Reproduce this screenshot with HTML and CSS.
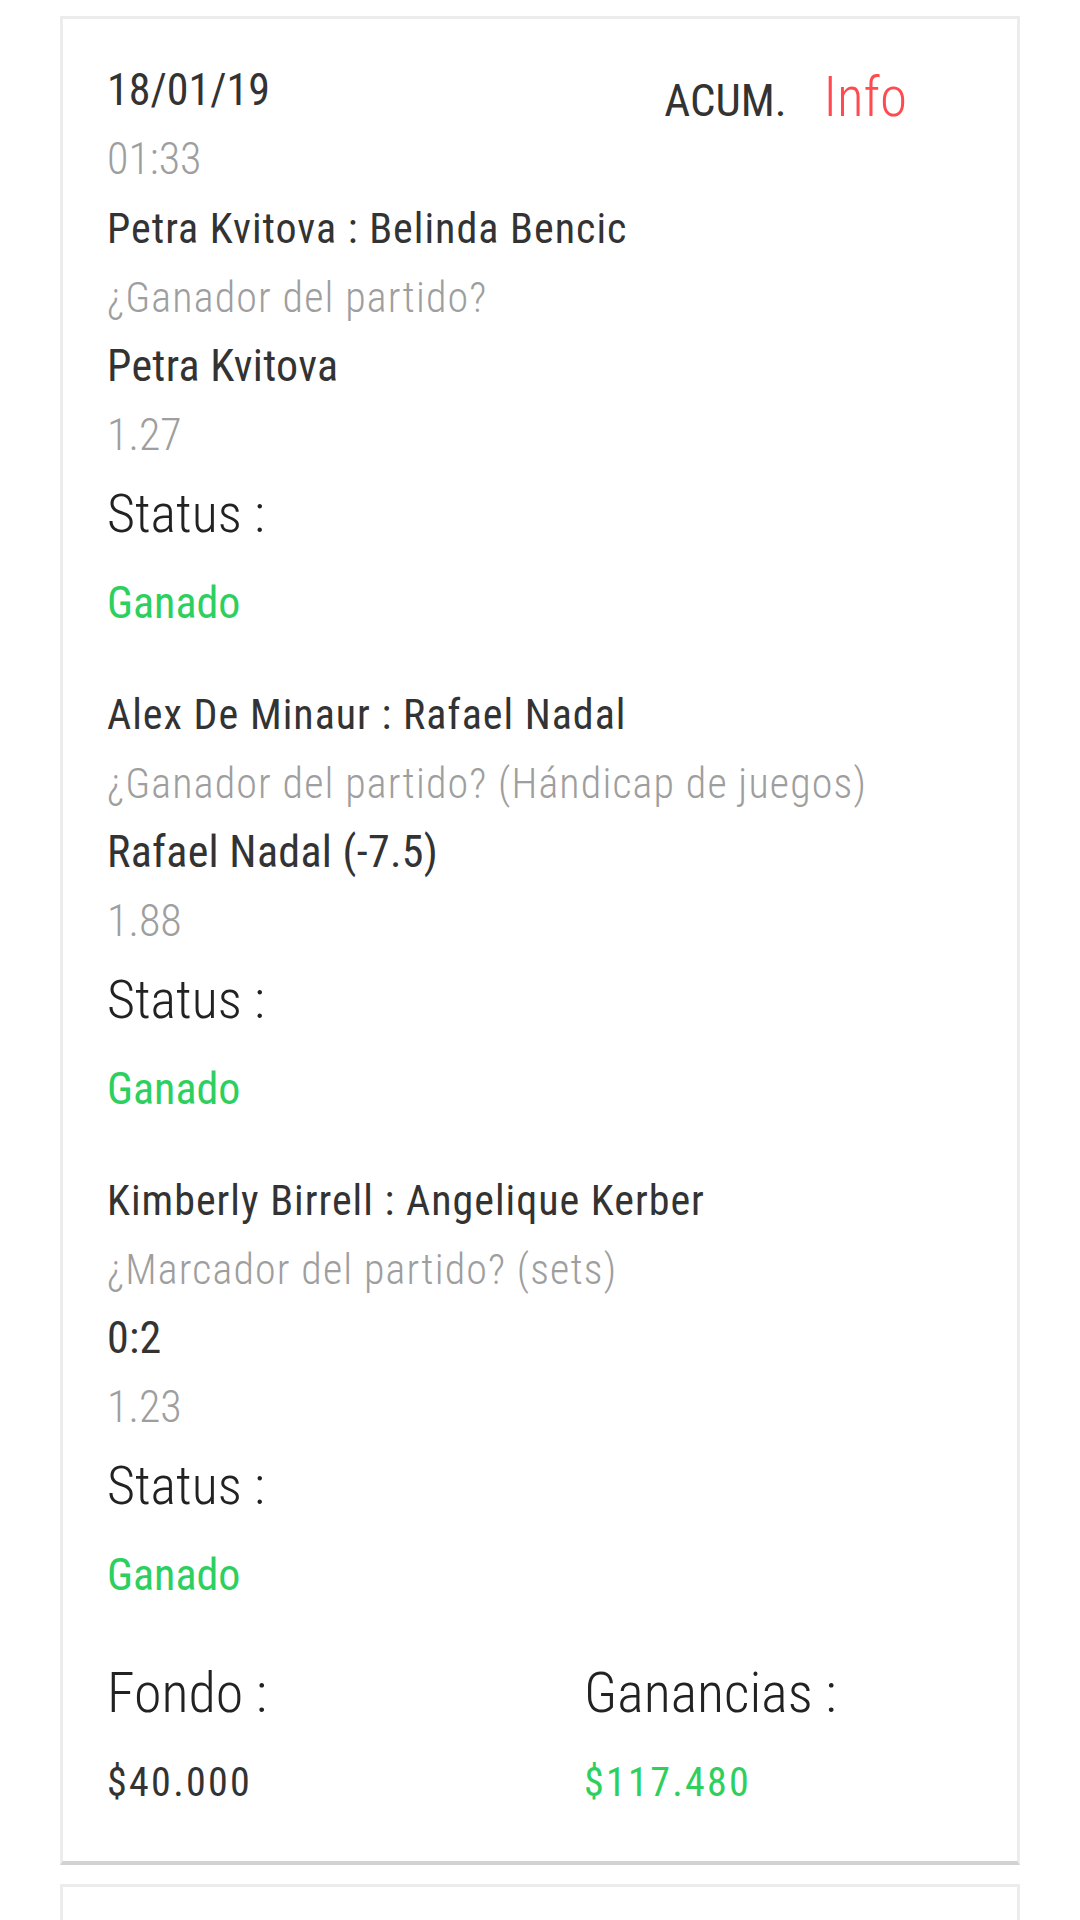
FILE: index.html
```html
<!DOCTYPE html>
<html lang="es">
<head>
<meta charset="utf-8">
<title>Apuesta acumulada</title>
<link rel="stylesheet" href="styles.css">
</head>
<body>
<div class="list">
  <article class="card">
    <header class="head">
      <div class="when">
        <div class="line strong date">18/01/19</div>
        <div class="line muted">01:33</div>
      </div>
      <div class="tags">
        <span class="acum">ACUM.</span>
        <span class="info">Info</span>
      </div>
    </header>

    <section class="bet first">
      <div class="line strong match">Petra Kvitova : Belinda Bencic</div>
      <div class="line muted question">¿Ganador del partido?</div>
      <div class="line strong pick">Petra Kvitova</div>
      <div class="line muted">1.27</div>
      <div class="line status">Status :</div>
      <div class="line strong won">Ganado</div>
    </section>

    <section class="bet">
      <div class="line strong match">Alex De Minaur : Rafael Nadal</div>
      <div class="line muted question">¿Ganador del partido? (Hándicap de juegos)</div>
      <div class="line strong pick">Rafael Nadal (-7.5)</div>
      <div class="line muted">1.88</div>
      <div class="line status">Status :</div>
      <div class="line strong won">Ganado</div>
    </section>

    <section class="bet">
      <div class="line strong match">Kimberly Birrell : Angelique Kerber</div>
      <div class="line muted question">¿Marcador del partido? (sets)</div>
      <div class="line strong pick">0:2</div>
      <div class="line muted">1.23</div>
      <div class="line status">Status :</div>
      <div class="line strong won">Ganado</div>
    </section>

    <footer class="totals">
      <div class="total">
        <div class="line label">Fondo :</div>
        <div class="line amount">$40.000</div>
      </div>
      <div class="total">
        <div class="line label">Ganancias :</div>
        <div class="line amount won">$117.480</div>
      </div>
    </footer>
  </article>
  <article class="card next"></article>
</div>
</body>
</html>
```
FILE: styles.css
```css
html, body {
  margin: 0;
  padding: 0;
  background: #ffffff;
}
body {
  font-family: "Roboto Condensed", Roboto, "Liberation Sans", sans-serif;
  font-stretch: condensed;
  color: #333333;
}
.list {
  padding: 16px 60px 0;
  display: flex;
  flex-direction: column;
  gap: 19px;
}
.card {
  border: 3px solid #ececec;
  border-bottom: 4px solid #d2d2d2;
  background: #fff;
  padding: 37px 44px 43px;
}
.card.next {
  height: 200px;
  border-bottom: none;
  padding: 0;
}
.line {
  font-size: 44px;
  line-height: 69px;
  white-space: nowrap;
}
.strong { font-weight: 400; color: #333333; }
.muted { font-weight: 300; color: #9e9e9e; }
.match, .question { font-size: 42px; }
.match { letter-spacing: 1px; }
.question { letter-spacing: 1.15px; }
.pick { letter-spacing: 0.3px; }
.head {
  display: flex;
  align-items: flex-start;
}
.tags {
  margin-left: auto;
  margin-right: 66px;
  margin-top: 6px;
  display: flex;
  align-items: baseline;
  gap: 37px;
  line-height: 70px;
}
.acum {
  font-size: 45px;
  font-weight: 400;
  color: #333333;
}
.info {
  font-size: 55px;
  font-weight: 300;
  color: #ff4b4f;
}
.bet { margin-top: 42px; }
.bet.first { margin-top: 0; }
.status {
  font-size: 54px;
  font-weight: 300;
  color: #222222;
  line-height: 70px;
  margin-top: 9px;
}
.won {
  color: #2dd05e;
  font-weight: 400;
}
.bet .won {
  line-height: 70px;
  margin-top: 19px;
}
.totals {
  margin-top: 48px;
  display: grid;
  grid-template-columns: 477px 1fr;
}
.label {
  font-size: 56px;
  font-weight: 300;
  color: #222222;
  line-height: 70px;
}
.amount {
  font-size: 40px;
  font-weight: 400;
  letter-spacing: 2.3px;
  line-height: 70px;
  margin-top: 20px;
  color: #333333;
}
.amount.won { color: #2dd05e; }
```
